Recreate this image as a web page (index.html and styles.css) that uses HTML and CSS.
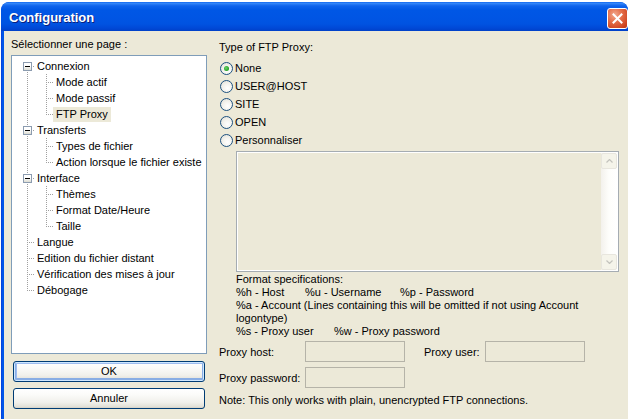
FILE: index.html
```html
<!DOCTYPE html>
<html lang="fr">
<head>
<meta charset="utf-8">
<title>Configuration</title>
<link rel="stylesheet" href="styles.css">
</head>
<body>
<div class="window">
  <div class="titlebar">
    <span class="title">Configuration</span>
    <span class="close">
      <svg width="11" height="11" viewBox="0 0 11 11"><path d="M1.5 1.5 L9.5 9.5 M9.5 1.5 L1.5 9.5" stroke="#fff" stroke-width="2" stroke-linecap="square"/></svg>
    </span>
  </div>
  <div class="client">
    <div class="leftcol">
      <div class="caption">Sélectionner une page :</div>
      <div class="tree">
        <div class="row"><span class="g first"><span class="box"></span></span><span class="lbl">Connexion</span></div>
        <div class="row"><span class="g pipe"></span><span class="g tee"></span><span class="lbl">Mode actif</span></div>
        <div class="row"><span class="g pipe"></span><span class="g tee"></span><span class="lbl">Mode passif</span></div>
        <div class="row"><span class="g pipe"></span><span class="g elbow"></span><span class="lbl sel">FTP Proxy</span></div>
        <div class="row"><span class="g tee"><span class="box"></span></span><span class="lbl">Transferts</span></div>
        <div class="row"><span class="g pipe"></span><span class="g tee"></span><span class="lbl">Types de fichier</span></div>
        <div class="row"><span class="g pipe"></span><span class="g elbow"></span><span class="lbl">Action lorsque le fichier existe</span></div>
        <div class="row"><span class="g tee"><span class="box"></span></span><span class="lbl">Interface</span></div>
        <div class="row"><span class="g pipe"></span><span class="g tee"></span><span class="lbl">Thèmes</span></div>
        <div class="row"><span class="g pipe"></span><span class="g tee"></span><span class="lbl">Format Date/Heure</span></div>
        <div class="row"><span class="g pipe"></span><span class="g elbow"></span><span class="lbl">Taille</span></div>
        <div class="row"><span class="g tee"></span><span class="lbl">Langue</span></div>
        <div class="row"><span class="g tee"></span><span class="lbl">Edition du fichier distant</span></div>
        <div class="row"><span class="g tee"></span><span class="lbl">Vérification des mises à jour</span></div>
        <div class="row"><span class="g elbow"></span><span class="lbl">Débogage</span></div>
      </div>
      <div class="btn default">OK</div>
      <div class="btn">Annuler</div>
    </div>
    <div class="rightcol">
      <div class="caption top">Type of FTP Proxy:</div>
      <div class="radios">
        <div class="radio checked"><span class="circle"></span>None</div>
        <div class="radio"><span class="circle"></span>USER@HOST</div>
        <div class="radio"><span class="circle"></span>SITE</div>
        <div class="radio"><span class="circle"></span>OPEN</div>
        <div class="radio"><span class="circle"></span>Personnaliser</div>
      </div>
      <div class="textarea">
        <div class="ta-body"></div>
        <div class="scrollbar">
          <span class="sb-btn"><svg width="7" height="4" viewBox="0 0 7 4"><path d="M0.5 3.5 L3.5 0.5 L6.5 3.5" fill="none" stroke="#c3c3bd" stroke-width="1.2"/></svg></span>
          <span class="sb-track"></span>
          <span class="sb-btn"><svg width="7" height="4" viewBox="0 0 7 4"><path d="M0.5 0.5 L3.5 3.5 L6.5 0.5" fill="none" stroke="#c3c3bd" stroke-width="1.2"/></svg></span>
        </div>
      </div>
      <div class="specs">
        <div>Format specifications:</div>
        <div><span class="c1">%h - Host</span><span class="c2">%u - Username</span><span>%p - Password</span></div>
        <div>%a - Account (Lines containing this will be omitted if not using Account<br>logontype)</div>
        <div><span class="c3">%s - Proxy user</span><span>%w - Proxy password</span></div>
      </div>
      <div class="field-row first">
        <span class="flabel w86">Proxy host:</span><span class="input"></span>
        <span class="flabel w61 ml19">Proxy user:</span><span class="input"></span>
      </div>
      <div class="field-row second">
        <span class="flabel w86">Proxy password:</span><span class="input"></span>
      </div>
      <div class="note">Note: This only works with plain, unencrypted FTP connections.</div>
    </div>
  </div>
</div>
</body>
</html>
```

FILE: styles.css
```css
html, body {
  margin: 0;
  padding: 0;
  background: #ffffff;
  overflow: hidden;
}
body {
  width: 628px;
  height: 419px;
  font-family: "Liberation Sans", Arial, sans-serif;
  font-size: 11px;
  color: #000;
}
.window {
  margin: 2px 0 0 1px;
  width: 627px;
  height: 417px;
  overflow: hidden;
  border-radius: 8px 8px 0 0;
  background: linear-gradient(to right, #0831D9 0, #0054E3 1px, #0058EE 2px, #0054E3 3px);
  display: flex;
  flex-direction: column;
}
.titlebar {
  height: 29px;
  flex: none;
  border-radius: 8px 8px 0 0;
  background: linear-gradient(to bottom, #0058EE 0, #3B8DF9 1px, #2A7CF5 2px, #0E63EC 4px, #0057E5 8px, #0055E4 16px, #0053E1 22px, #0049D7 26px, #0040C8 29px);
  display: flex;
  align-items: center;
  justify-content: space-between;
  padding: 0 0 0 8px;
}
.title {
  color: #fff;
  font-weight: bold;
  font-size: 13px;
  text-shadow: 1px 1px 0 #0A1F7D;
  margin-top: 1px;
}
.close {
  width: 19px;
  height: 19px;
  border: 1px solid #fff;
  border-radius: 3px;
  background: radial-gradient(circle at 35% 30%, #F2A98F 0, #E56F4A 40%, #CF4420 80%, #B83713 100%);
  display: flex;
  align-items: center;
  justify-content: center;
  margin-top: 3px;
}
.client {
  flex: 1;
  min-height: 0;
  margin-left: 3px;
  background: #ECE9D8;
  display: flex;
  padding: 7px 0 0 7px;
  gap: 12px;
}
.leftcol {
  width: 196px;
  display: flex;
  flex-direction: column;
}
.caption {
  height: 13px;
  line-height: 13px;
  margin-bottom: 4px;
}
.caption.top {
  margin-top: 3px;
  margin-bottom: 5px;
}
.tree {
  height: 295px;
  flex: none;
  border: 1px solid #7F9DB9;
  background: #fff;
  padding: 2px 0 0 3px;
}
.row {
  display: flex;
  height: 16px;
  line-height: 16px;
}
.g {
  width: 19px;
  height: 16px;
  flex: none;
  display: flex;
  background-repeat: no-repeat;
}
.g.pipe {
  background-image: repeating-linear-gradient(to bottom, #A0A0A0 0 1px, transparent 1px 2px);
  background-position: 12px 0;
  background-size: 1px 16px;
}
.g.tee {
  background-image: repeating-linear-gradient(to bottom, #A0A0A0 0 1px, transparent 1px 2px), repeating-linear-gradient(to right, #A0A0A0 0 1px, transparent 1px 2px);
  background-position: 12px 0, 12px 8px;
  background-size: 1px 16px, 7px 1px;
}
.g.elbow {
  background-image: repeating-linear-gradient(to bottom, #A0A0A0 0 1px, transparent 1px 2px), repeating-linear-gradient(to right, #A0A0A0 0 1px, transparent 1px 2px);
  background-position: 12px 0, 12px 8px;
  background-size: 1px 9px, 7px 1px;
}
.g.first {
  background-image: repeating-linear-gradient(to bottom, #A0A0A0 0 1px, transparent 1px 2px), repeating-linear-gradient(to right, #A0A0A0 0 1px, transparent 1px 2px);
  background-position: 12px 8px, 12px 8px;
  background-size: 1px 8px, 7px 1px;
}
.box {
  width: 7px;
  height: 7px;
  margin: 4px 0 0 8px;
  border: 1px solid #8C9CB0;
  background: linear-gradient(#000, #000) 1px 3px / 5px 1px no-repeat, linear-gradient(to bottom, #fff 0, #fff 40%, #DCDCD2 100%);
}
.lbl {
  padding: 0 3px;
  white-space: nowrap;
}
.lbl.sel {
  background: #ECE9D8;
  height: 15px;
  line-height: 15px;
  margin-top: 1px;
}
.btn {
  height: 19px;
  flex: none;
  margin-left: 2px;
  width: 190px;
  border: 1px solid #003C74;
  border-radius: 3px;
  background: linear-gradient(to bottom, #FFFFFF 0, #FBFBF9 30%, #F1F0EB 70%, #E3E1D8 92%, #D6D0C5 100%);
  text-align: center;
  line-height: 19px;
}
.btn.default {
  margin-top: 7px;
  box-shadow: inset 0 0 0 1px #CEE7FF, inset 0 -1px 0 2px #89ADE4, inset 1px 0 0 2px #9DBCF0;
}
.btn + .btn {
  margin-top: 6px;
}
.rightcol {
  display: flex;
  flex-direction: column;
}
.radios {
  display: flex;
  flex-direction: column;
}
.radio {
  height: 18px;
  display: flex;
  align-items: center;
}
.circle {
  width: 11px;
  height: 11px;
  border: 1px solid #1C5180;
  border-radius: 50%;
  margin: 0 2px 0 1px;
  background: radial-gradient(circle at 60% 65%, #FFFFFF 0, #F4F3EE 45%, #DCDBD3 100%);
  display: flex;
  align-items: center;
  justify-content: center;
}
.radio.checked .circle::after {
  content: "";
  width: 5px;
  height: 5px;
  border-radius: 50%;
  background: radial-gradient(circle at 40% 40%, #6CD16C 0, #21A121 70%);
}
.textarea {
  margin: 2px 0 0 17px;
  width: 379px;
  height: 117px;
  flex: none;
  border: 1px solid #A5ACB2;
  box-shadow: inset 0 0 0 1px #FFFFFF;
  display: flex;
  padding: 1px;
  box-sizing: content-box;
}
.ta-body {
  flex: 1;
}
.scrollbar {
  width: 16px;
  display: flex;
  flex-direction: column;
  background: linear-gradient(to right, #F3F1EC 0, #FEFEFB 50%, #FFFFFF 100%);
}
.sb-btn {
  height: 16px;
  flex: none;
  box-sizing: border-box;
  border: 1px solid #E8E6DE;
  border-radius: 2px;
  background: #F5F4EA;
  display: flex;
  align-items: center;
  justify-content: center;
}
.sb-track {
  flex: 1;
}
.specs {
  margin: 1px 0 0 17px;
  line-height: 13px;
}
.c1 {
  display: inline-block;
  width: 69px;
}
.c2 {
  display: inline-block;
  width: 95px;
}
.c3 {
  display: inline-block;
  width: 98px;
}
.field-row {
  display: flex;
  align-items: center;
  height: 21px;
  flex: none;
}
.field-row.first {
  margin-top: 3px;
}
.field-row.second {
  margin-top: 5px;
}
.flabel {
  flex: none;
}
.w86 {
  width: 86px;
}
.w61 {
  width: 61px;
}
.ml19 {
  margin-left: 19px;
}
.input {
  width: 98px;
  height: 19px;
  border: 1px solid #B5B3A8;
  background: #ECE9D8;
  flex: none;
}
.note {
  margin-top: 6px;
  line-height: 13px;
}
```
